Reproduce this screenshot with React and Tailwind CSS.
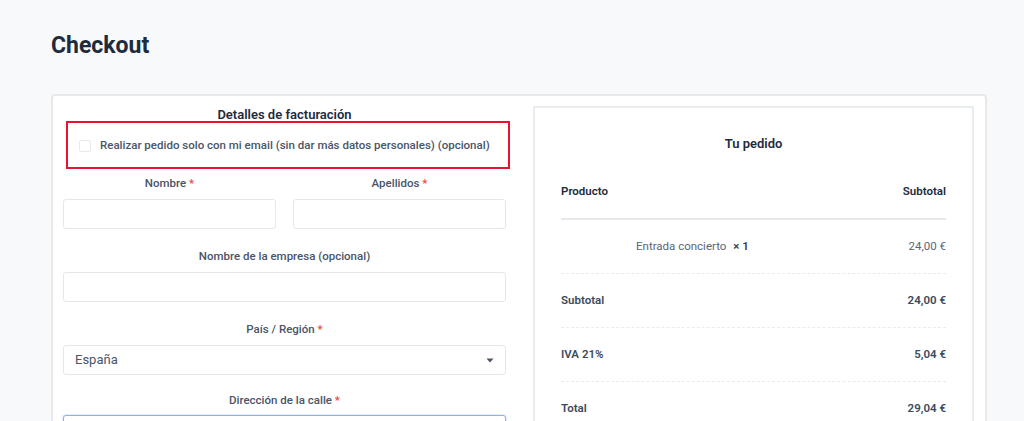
export default function App() {
  const label = 'block text-center text-[11.5px] leading-[16px] font-medium text-[#4a5568]';
  const input = 'block w-full h-[30px] rounded-[3px] border border-[#e5e7eb] bg-white';
  const Req = () => <span className="text-[#ef4444]"> *</span>;

  return (
    <div className="min-h-screen bg-[#f8f9fb] font-['Roboto',sans-serif] overflow-hidden h-[421px]">
      <div className="pl-[51px] pr-[37px]">
        <h1 className="pt-[32px] text-[23px] leading-[28px] font-bold text-[#1e2b3c]">Checkout</h1>

        <div className="mt-[34px] rounded-[4px] border-2 border-[#e6e8eb] bg-white pl-[10px] pr-[11px] pt-[10px]">
          <div className="flex gap-[27px]">
            {/* Billing details */}
            <div className="w-[443px] shrink-0">
              <h3 className="h-[15px] text-center text-[13px] leading-[18px] font-semibold text-[#1e2b3c]">
                Detalles de facturación
              </h3>
              <div className="relative ml-[3px] mr-[-4px] flex h-[48px] items-center border-2 border-[#e8132e] pl-[11px] pt-[2px]">
                <span className="h-[12px] w-[12px] rounded-[2px] border border-[#e6e9ee] bg-white" />
                <span className="ml-[9px] text-[11.5px] font-medium text-[#4a5568]">
                  Realizar pedido solo con mi email (sin dar más datos personales) (opcional)
                </span>
              </div>

              <div className="mt-[6px] grid grid-cols-2 gap-x-[17px]">
                <div>
                  <label className={label}>Nombre<Req /></label>
                  <div className={`${input} mt-[8px]`} />
                </div>
                <div>
                  <label className={label}>Apellidos<Req /></label>
                  <div className={`${input} mt-[8px]`} />
                </div>
              </div>

              <div className="mt-[19px]">
                <label className={label}>Nombre de la empresa (opcional)</label>
                <div className={`${input} mt-[8px]`} />
              </div>

              <div className="mt-[19px]">
                <label className={label}>País / Región<Req /></label>
                <div className={`${input} mt-[8px] flex items-center justify-between pl-[11px] pr-[11px]`}>
                  <span className="text-[13px] text-[#4a5568]">España</span>
                  <svg width="8" height="5" viewBox="0 0 8 5" className="text-[#4a5568]">
                    <path d="M0.5 0.5h7L4 4.5z" fill="currentColor" />
                  </svg>
                </div>
              </div>

              <div className="mt-[17px]">
                <label className={label}>Dirección de la calle<Req /></label>
                <div className="mt-[7px] block h-[30px] w-full rounded-[3px] border border-[#8fb0f2] bg-white shadow-[0_0_0_1px_rgba(143,176,242,0.25)]" />
              </div>
            </div>

            {/* Order summary */}
            <div className="w-[441px] shrink-0 border-2 border-[#e8ecf1] bg-white px-[26px] pt-[26px] pb-[20px]">
              <h3 className="text-center text-[13px] leading-[20px] font-semibold text-[#1e2b3c]">Tu pedido</h3>
              <div className="mt-[10px]">
                <div className="flex h-[56px] items-center justify-between border-b-2 border-[#e5e9ee] pt-[2px] text-[11.5px] font-semibold text-[#1e2b3c]">
                  <span>Producto</span>
                  <span>Subtotal</span>
                </div>
                <div className="flex h-[54px] items-center justify-between border-b border-dashed border-[#e8ecf0] text-[11.5px] text-[#5a6677]">
                  <span className="pl-[75px]">
                    Entrada concierto <span className="ml-[4px] font-semibold text-[#334155]">× 1</span>
                  </span>
                  <span>24,00 €</span>
                </div>
                <div className="flex h-[54px] items-center justify-between border-b border-dashed border-[#e8ecf0] text-[11.5px] font-semibold text-[#3d4a5c]">
                  <span>Subtotal</span>
                  <span>24,00 €</span>
                </div>
                <div className="flex h-[54px] items-center justify-between border-b border-dashed border-[#e8ecf0] text-[11.5px] font-semibold text-[#3d4a5c]">
                  <span>IVA 21%</span>
                  <span>5,04 €</span>
                </div>
                <div className="flex h-[54px] items-center justify-between text-[11.5px] font-semibold text-[#3d4a5c]">
                  <span>Total</span>
                  <span>29,04 €</span>
                </div>
              </div>
            </div>
          </div>
        </div>
      </div>
    </div>
  );
}
